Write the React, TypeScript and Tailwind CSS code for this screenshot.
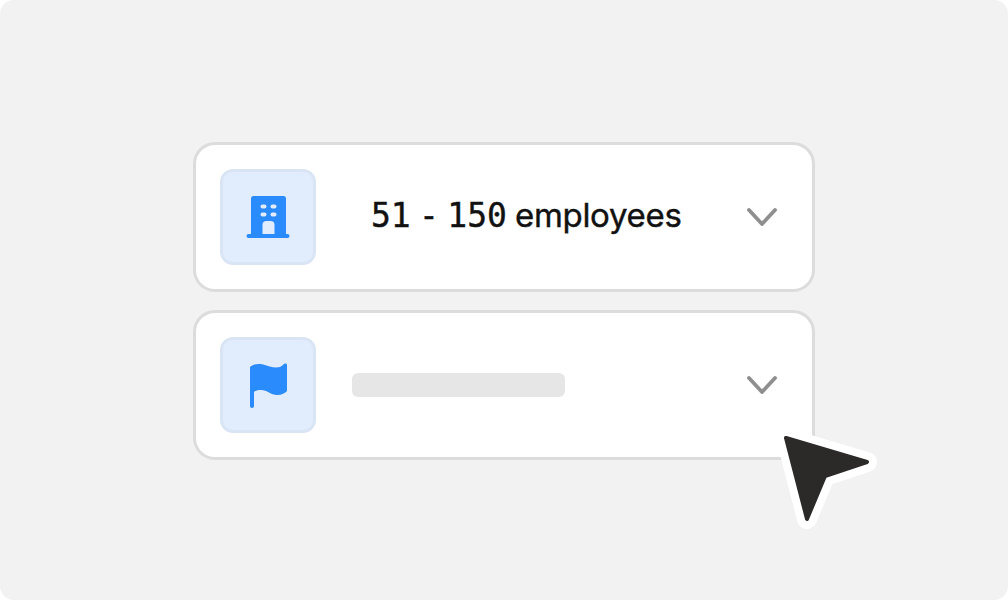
const Chevron = () => (
  <svg width="32" height="22" viewBox="0 0 32 22" fill="none" className="shrink-0">
    <path d="M3 4 L16 18 L29 4" stroke="#8f8f8f" strokeWidth="3.800" strokeLinecap="round" strokeLinejoin="round" />
  </svg>
);

const Building = () => (
  <svg width="44" height="44" viewBox="0 0 44 44">
    <path fill="#2a8bfd" d="M5 3.500a2.500 2.500 0 0 1 2.500 -2.500h30a2.500 2.500 0 0 1 2.500 2.500V39H5Z" />
    <rect x="0.500" y="39" width="43" height="4" rx="2" fill="#2a8bfd" />
    <rect x="14.500" y="9.500" width="6" height="4" rx="2" fill="#e1edfd" />
    <rect x="24.500" y="9.500" width="6" height="4" rx="2" fill="#e1edfd" />
    <rect x="14.500" y="17.500" width="6" height="4" rx="2" fill="#e1edfd" />
    <rect x="24.500" y="17.500" width="6" height="4" rx="2" fill="#e1edfd" />
    <path d="M16.500 39V30a4 4 0 0 1 4 -4h4a4 4 0 0 1 4 4V39Z" fill="#e1edfd" />
  </svg>
);

const Flag = () => (
  <svg width="40" height="46" viewBox="-1 0 40 46">
    <path fill="#2a8bfd" d="M1 5C4 2 9 1.500 14 2.500C20 4 25 6.500 31 5C33.500 4 34.500 2 36 1.500C37 1.200 38 2 38 3V29C36 31 33 33 28 33C22 33 18 28 12 28C9 28 6.500 28.500 5 30V44a2 2 0 0 1-4 0Z" />
  </svg>
);

const Row = ({ icon, children }: { icon: React.ReactNode; children: React.ReactNode }) => (
  <div className="flex h-[150px] w-[622px] items-center rounded-[22px] border-[3px] border-[#dcdcdc] bg-white pl-[24px] pr-[34px]">
    <div className="flex h-[96px] w-[96px] shrink-0 items-center justify-center rounded-[13px] border-[3px] border-[#d9e5f5] bg-[#e1edfd]">
      {icon}
    </div>
    <div className="flex min-w-0 flex-1 items-center">{children}</div>
    <Chevron />
  </div>
);

export default function App() {
  return (
    <div className="h-[600px] w-[1008px] bg-white">
      <div className="relative flex h-full w-full flex-col items-center justify-center gap-[18px] rounded-[14px] bg-[#f2f2f2] pt-[2px]">
        <Row icon={<Building />}>
          <div className="mb-[2px] ml-[55px] flex items-baseline whitespace-nowrap text-[#111111] [-webkit-text-stroke:0.400px_#111111]">
            <span className="font-['DejaVu_Sans_Mono',monospace] text-[33px] [word-spacing:-11.500px]">51 - 150</span>
            <span className="ml-[8px] font-['Inter',sans-serif] text-[33px] tracking-[-0.300px]">employees</span>
          </div>
        </Row>
        <Row icon={<Flag />}>
          <div className="ml-[36px] h-[24px] w-[213px] rounded-[6px] bg-[#e6e6e6]" />
        </Row>
        <svg width="104" height="104" viewBox="0 0 104 104" className="absolute left-[778px] top-[430px]">
          <path d="M8 8 L89 32 L47 46 L29 89 Z" fill="#2b2a28" stroke="#ffffff" strokeWidth="20" strokeLinejoin="round" />
          <path d="M8 8 L89 32 L47 46 L29 89 Z" fill="#2b2a28" stroke="#2b2a28" strokeWidth="4" strokeLinejoin="round" />
        </svg>
      </div>
    </div>
  );
}
